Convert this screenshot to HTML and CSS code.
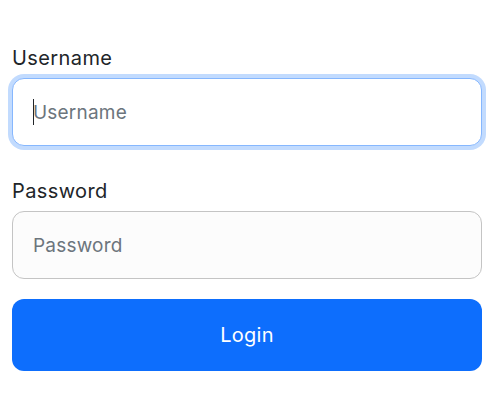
FILE: index.html
```html
<!DOCTYPE html>
<html lang="en">
<head>
<meta charset="utf-8">
<title>Login</title>
<link rel="stylesheet" href="styles.css">
</head>
<body>
<form class="login-form">
  <div class="field">
    <label class="field-label" for="username">Username</label>
    <div class="input-wrap">
      <input class="field-input is-focused" id="username" type="text" placeholder="Username">
      <span class="caret"></span>
    </div>
  </div>
  <div class="field">
    <label class="field-label" for="password">Password</label>
    <input class="field-input" id="password" type="password" placeholder="Password">
  </div>
  <button class="btn-login" type="button">Login</button>
</form>
</body>
</html>
```

FILE: styles.css
```css
html, body {
  margin: 0;
  padding: 0;
  background: #ffffff;
}

body {
  font-family: "Inter", "Open Sans", sans-serif;
  color: #212529;
}

.login-form {
  display: flex;
  flex-direction: column;
  padding: 45px 10px 0 12px;
}

.field {
  display: flex;
  flex-direction: column;
  margin-bottom: 32px;
}

.field:last-of-type {
  margin-bottom: 20px;
}

.field-label {
  font-size: 20px;
  line-height: 26px;
  letter-spacing: 0.4px;
  margin-bottom: 7px;
  color: #212529;
}

.input-wrap {
  position: relative;
}

.field-input {
  box-sizing: border-box;
  width: 100%;
  height: 68px;
  padding: 0 20px;
  font-family: inherit;
  font-size: 19px;
  letter-spacing: 0.2px;
  color: #212529;
  background: #fcfcfc;
  border: 1px solid #c4c4c4;
  border-radius: 12px;
  outline: none;
  caret-color: transparent;
}

.field-input::placeholder {
  color: #6c757d;
}

.field-input.is-focused {
  background: #ffffff;
  border-color: #86b7fe;
  box-shadow: 0 0 0 4px rgba(13, 110, 253, 0.25);
}

.caret {
  position: absolute;
  left: 21px;
  top: 21px;
  width: 1px;
  height: 26px;
  background: #212529;
}

.btn-login {
  box-sizing: border-box;
  width: 100%;
  height: 72px;
  border: none;
  border-radius: 12px;
  background: #0d6efd;
  color: #ffffff;
  font-family: inherit;
  font-size: 20px;
  letter-spacing: 0.3px;
  cursor: pointer;
}
```
